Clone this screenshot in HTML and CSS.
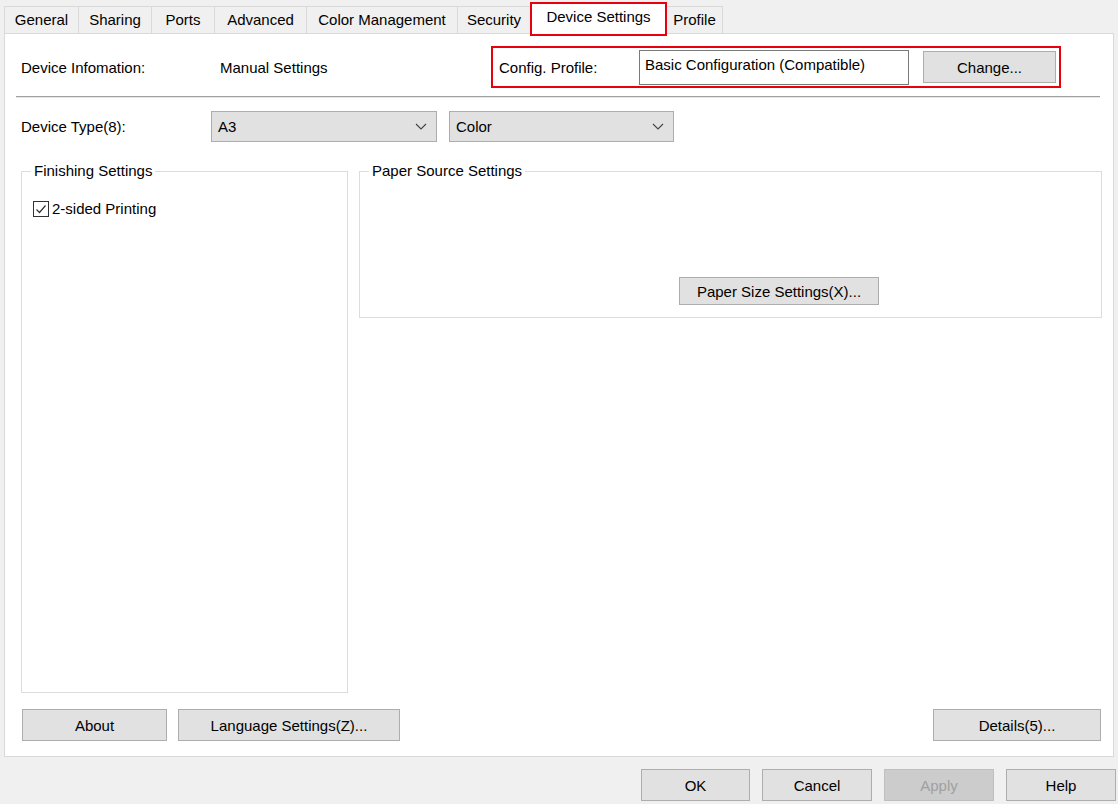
FILE: index.html
```html
<!DOCTYPE html>
<html lang="en">
<head>
<meta charset="utf-8">
<title>Printer Properties - Device Settings</title>
<link rel="stylesheet" href="styles.css">
</head>
<body>
<div class="dialog">
  <div class="tabs">
    <div class="tab w-general">General</div>
    <div class="tab w-sharing">Sharing</div>
    <div class="tab w-ports">Ports</div>
    <div class="tab w-advanced">Advanced</div>
    <div class="tab w-color">Color Management</div>
    <div class="tab w-security">Security</div>
    <div class="tab tab-active w-device">Device Settings</div>
    <div class="tab tab-last w-profile">Profile</div>
  </div>

  <div class="panel">
    <div class="info-row">
      <span class="label label-info">Device Infomation:</span>
      <span class="label label-manual">Manual Settings</span>
      <div class="highlight-box">
        <span class="label label-config">Config. Profile:</span>
        <div class="textbox">Basic Configuration (Compatible)</div>
        <button class="btn btn-change">Change...</button>
      </div>
    </div>

    <div class="separator"></div>

    <div class="type-row">
      <span class="label label-type">Device Type(8):</span>
      <div class="select select-a3">
        <span>A3</span>
        <svg class="chevron" width="12" height="7" viewBox="0 0 12 7"><polyline points="1,1 6,6 11,1" fill="none" stroke="#444" stroke-width="1.1"/></svg>
      </div>
      <div class="select select-color">
        <span>Color</span>
        <svg class="chevron" width="12" height="7" viewBox="0 0 12 7"><polyline points="1,1 6,6 11,1" fill="none" stroke="#444" stroke-width="1.1"/></svg>
      </div>
    </div>

    <div class="groups-row">
      <fieldset class="group group-finishing">
        <legend>Finishing Settings</legend>
        <label class="check-row">
          <span class="checkbox">
            <svg width="14" height="14" viewBox="0 0 14 14"><polyline points="2.5,7.5 5.5,10.5 11.5,3.5" fill="none" stroke="#333" stroke-width="1.2"/></svg>
          </span>
          <span>2-sided Printing</span>
        </label>
      </fieldset>
      <fieldset class="group group-paper">
        <legend>Paper Source Settings</legend>
        <button class="btn btn-papersize">Paper Size Settings(X)...</button>
      </fieldset>
    </div>

    <div class="panel-buttons">
      <button class="btn btn-about">About</button>
      <button class="btn btn-language">Language Settings(Z)...</button>
      <button class="btn btn-details">Details(5)...</button>
    </div>
  </div>

  <div class="footer">
    <button class="btn btn-foot">OK</button>
    <button class="btn btn-foot">Cancel</button>
    <button class="btn btn-foot btn-disabled">Apply</button>
    <button class="btn btn-foot">Help</button>
  </div>
</div>
</body>
</html>
```

FILE: styles.css
```css
* { box-sizing: border-box; }

html, body {
  margin: 0;
  padding: 0;
  background: #f0f0f0;
}

body {
  font-family: "Liberation Sans", Arial, sans-serif;
  font-size: 15px;
  color: #000;
  width: 1118px;
  height: 804px;
  overflow: hidden;
}

.dialog {
  display: flex;
  flex-direction: column;
}

/* Tabs */
.tabs {
  display: flex;
  align-items: flex-end;
  height: 33px;
  padding-left: 4px;
}

.tab {
  height: 27px;
  line-height: 26px;
  background: #f0f0f0;
  border: 1px solid #d9d9d9;
  border-right: none;
  border-bottom: none;
  text-align: center;
  white-space: nowrap;
  color: #000;
}

.tab-last { border-right: 1px solid #d9d9d9; }

.w-general { width: 74px; }
.w-sharing { width: 73px; }
.w-ports { width: 63px; }
.w-advanced { width: 92px; }
.w-color { width: 151px; }
.w-security { width: 73px; }
.w-device { width: 137px; }
.w-profile { width: 56px; }

.tab-active {
  height: 34px;
  margin-bottom: -3px;
  line-height: 26px;
  background: #fff;
  border: 2px solid #e8000d;
  position: relative;
  z-index: 2;
}

.tab-active + .tab { border-left: none; }

/* Panel */
.panel {
  margin-left: 4px;
  width: 1110px;
  height: 724px;
  background: #fff;
  border: 1px solid #d9d9d9;
  display: flex;
  flex-direction: column;
}

.label { white-space: nowrap; }

.info-row {
  display: flex;
  align-items: center;
  height: 42px;
  margin-top: 12px;
  padding-left: 16px;
}

.label-info { width: 199px; }
.label-manual { width: 271px; }

.highlight-box {
  display: flex;
  align-items: center;
  width: 570px;
  height: 42px;
  border: 2px solid #e8000d;
  padding-left: 6px;
}

.label-config { width: 140px; }

.textbox {
  width: 270px;
  height: 35px;
  border: 1px solid #7a7a7a;
  background: #fff;
  padding: 5px 0 0 5px;
  line-height: 18px;
  white-space: nowrap;
}

.btn {
  font-family: "Liberation Sans", Arial, sans-serif;
  font-size: 15px;
  color: #000;
  background: #e1e1e1;
  border: 1px solid #adadad;
  padding: 0;
  margin: 0;
  text-align: center;
  white-space: nowrap;
}

.btn-change {
  width: 133px;
  height: 32px;
  margin-left: 14px;
}

.separator {
  margin: 8px 13px 0 11px;
  height: 2px;
  border-top: 1px solid #a0a0a0;
  border-bottom: 1px solid #e6e6e6;
}

.type-row {
  display: flex;
  align-items: center;
  margin-top: 13px;
  padding-left: 16px;
  height: 31px;
}

.label-type { width: 190px; }

.select {
  display: flex;
  align-items: center;
  justify-content: space-between;
  height: 31px;
  background: #e1e1e1;
  border: 1px solid #adadad;
  padding: 0 9px 0 6px;
}

.select-a3 { width: 226px; }
.select-color { width: 225px; margin-left: 12px; }

.chevron { display: block; }

/* Groups */
.groups-row {
  display: flex;
  align-items: flex-start;
  gap: 11px;
  margin-top: 20px;
  padding-left: 16px;
}

.group {
  margin: 0;
  border: 1px solid #dcdcdc;
  padding: 0 10px 0 9px;
  min-width: 0;
}

.group legend {
  padding: 0 3px;
  line-height: 18px;
  font-size: 15px;
}

.group-finishing {
  width: 327px;
  height: 531px;
}

.group-paper {
  width: 743px;
  height: 156px;
}

.check-row {
  display: flex;
  align-items: center;
  margin-top: 20px;
  margin-left: 2px;
  line-height: 18px;
}

.checkbox {
  width: 16px;
  height: 16px;
  border: 1px solid #333;
  background: #fff;
  display: flex;
  align-items: center;
  justify-content: center;
  margin-right: 3px;
}

.checkbox svg { display: block; }

.btn-papersize {
  display: block;
  width: 200px;
  height: 28px;
  margin-top: 97px;
  margin-left: 310px;
}

/* Panel bottom buttons */
.panel-buttons {
  display: flex;
  margin-top: 16px;
  padding-left: 17px;
  padding-right: 12px;
}

.btn-about { width: 145px; height: 32px; }
.btn-language { width: 222px; height: 32px; margin-left: 11px; }
.btn-details { width: 168px; height: 32px; margin-left: auto; }

/* Footer */
.footer {
  display: flex;
  justify-content: flex-end;
  gap: 12px;
  margin-top: 12px;
  padding-right: 2px;
}

.btn-foot {
  width: 110px;
  height: 32px;
}

.btn-foot:first-child { width: 109px; }

.btn-disabled {
  background: #cccccc;
  border-color: #bfbfbf;
  color: #a0a0a0;
}
```
